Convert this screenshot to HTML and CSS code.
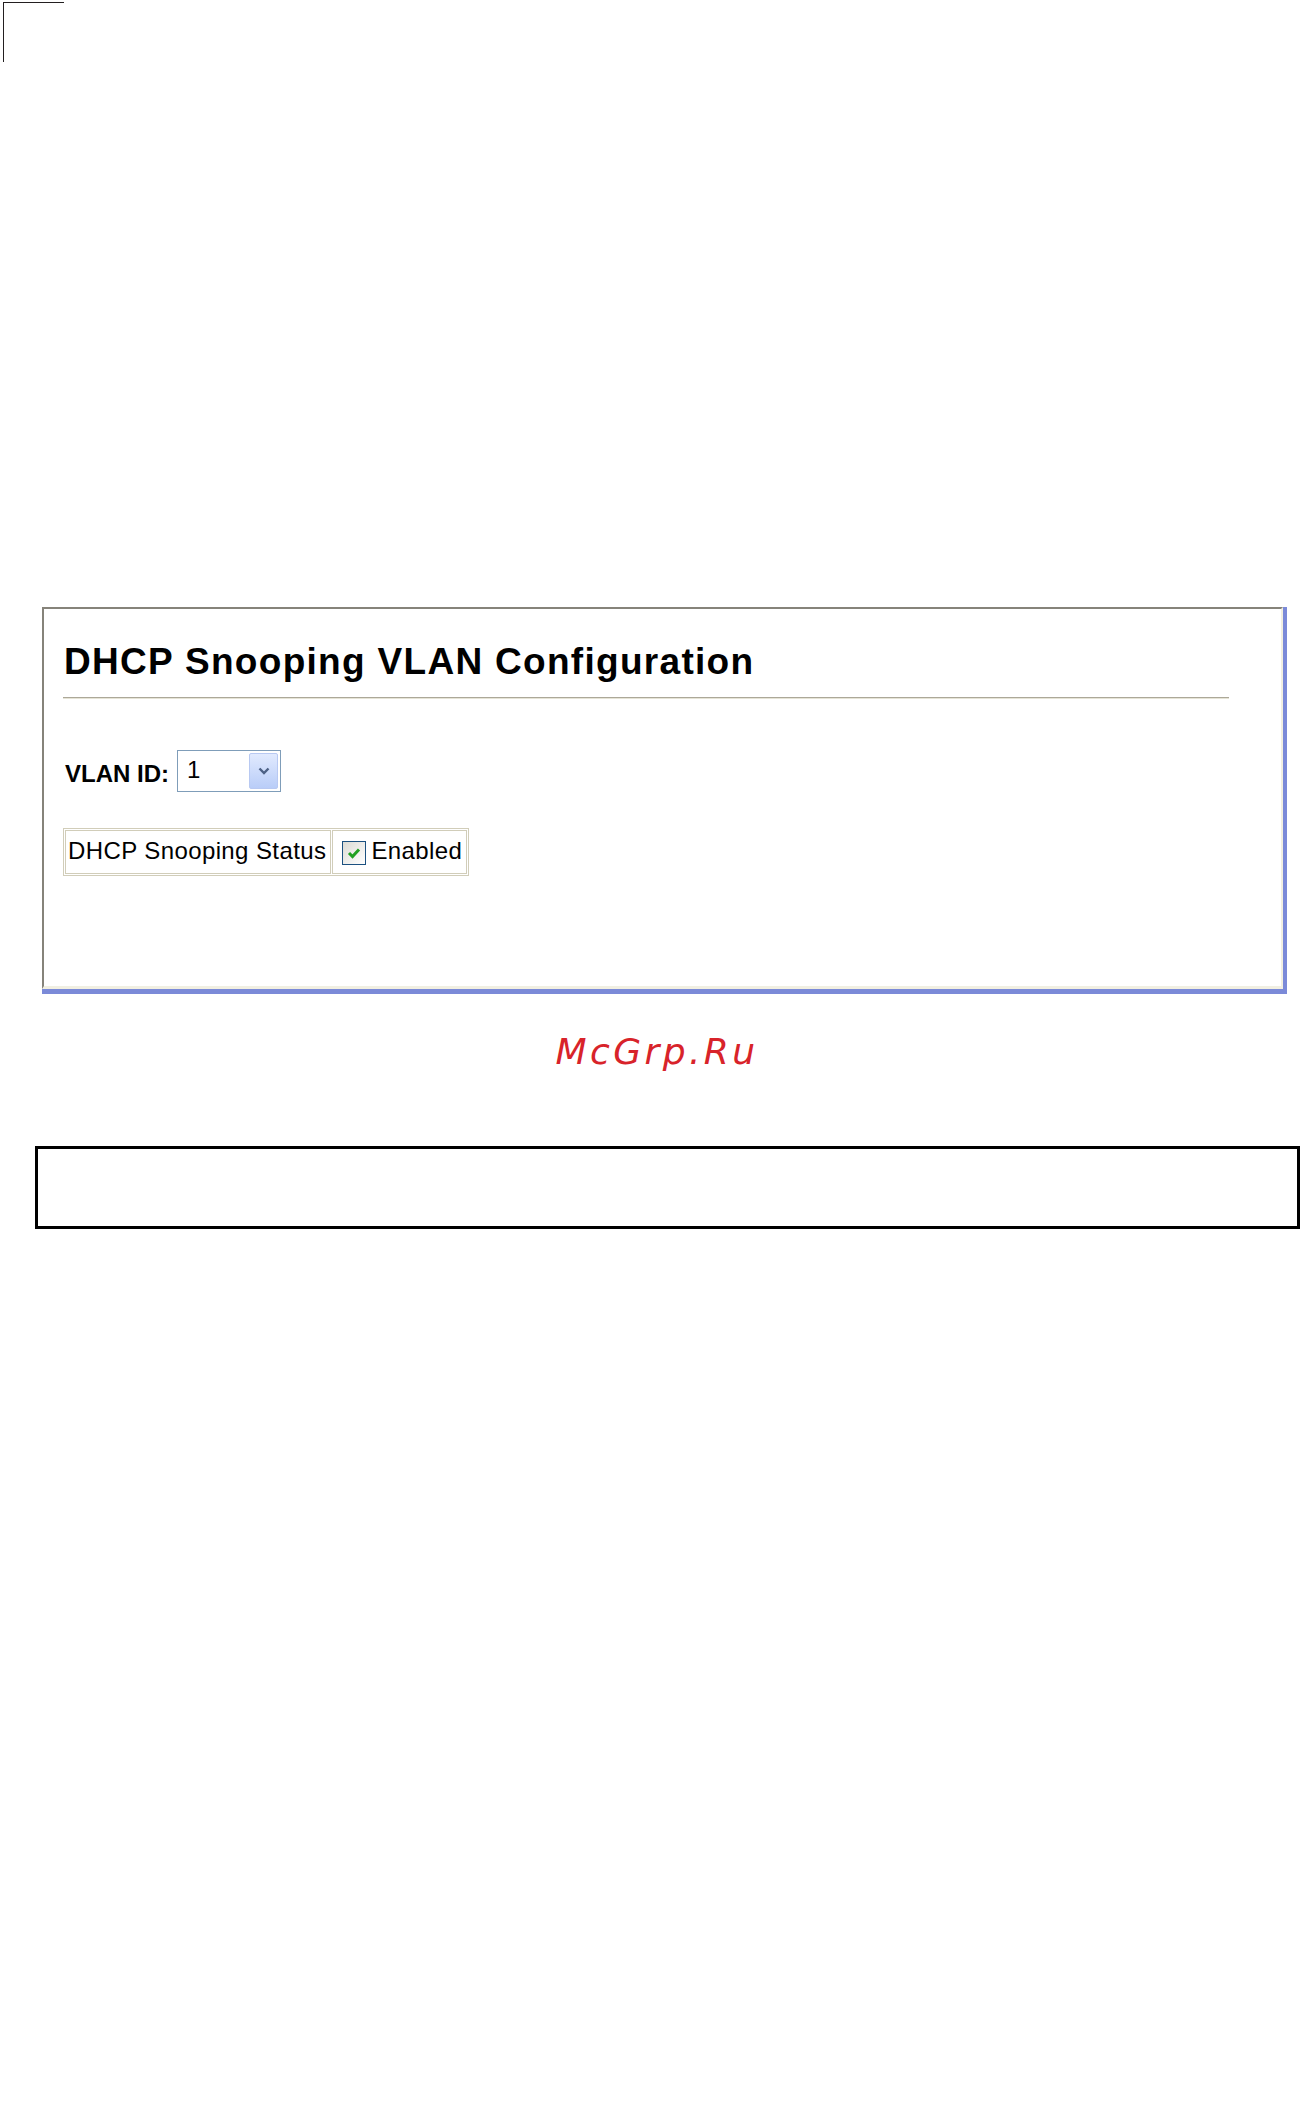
FILE: index.html
```html
<!DOCTYPE html>
<html lang="en">
  <head>
    <meta charset="UTF-8" />
    <meta name="viewport" content="width=device-width, initial-scale=1.0" />
    <title>DHCP Snooping VLAN Configuration</title>
    <link rel="stylesheet" href="styles.css">
  </head>
  <body>
    <div class="crop-mark"></div>

    <div class="panel">
      <div class="panel-inner">
        <h1>DHCP Snooping VLAN Configuration</h1>

        <div class="vlan-row">
          <label for="vlan">VLAN ID:</label>
          <div class="select" id="vlan">
            <span class="select-value">1</span>
            <span class="select-btn">
              <svg width="12" height="8" viewBox="0 0 12 8">
                <path d="M1.5 1.5 L6 6 L10.5 1.5" fill="none" stroke="#4d6185" stroke-width="2.4" />
              </svg>
            </span>
          </div>
        </div>

        <table class="status">
          <tr>
            <td>DHCP Snooping Status</td>
            <td class="status-value"><span class="check"><svg width="18" height="18" viewBox="0 0 18 18"><path d="M4 9 L7.5 12.5 L14 5.5" fill="none" stroke="#21a121" stroke-width="3" /></svg></span>Enabled</td>
          </tr>
        </table>
      </div>
    </div>

    <p class="mark">McGrp.Ru</p>

    <div class="note-box"></div>
  </body>
</html>
```

FILE: styles.css
```css
* {
  box-sizing: border-box;
}
body {
  margin: 0;
  background: #fff;
  font-family: "Liberation Sans", Arial, sans-serif;
  color: #000;
}

.crop-mark {
  width: 61px;
  height: 60px;
  margin: 2px 0 0 3px;
  border-top: 1px solid #231f20;
  border-left: 1px solid #231f20;
}

/* window frame */
.panel {
  width: 1245px;
  margin: 545px 0 0 42px;
  border-right: 4px solid #7b8ad8;
  border-bottom: 5px solid #7b8ad8;
}
.panel-inner {
  border-top: 2px solid #86837a;
  border-left: 2px solid #86837a;
  border-right: 2px solid #f1efe2;
  border-bottom: 3px solid #f1efe2;
  padding: 0 0 110px 19px;
}

h1 {
  width: 1166px;
  margin: 32px 0 0;
  padding: 0 0 14px 1px;
  font-size: 37px;
  line-height: 42px;
  font-weight: bold;
  letter-spacing: 1.3px;
  border-bottom: 1px solid #aca899;
  box-shadow: 0 1px 0 #e6e4d6;
}

.vlan-row {
  display: flex;
  align-items: flex-end;
  gap: 8px;
  margin: 52px 0 0 2px;
}
.vlan-row label {
  font-size: 24px;
  font-weight: bold;
  line-height: 28px;
  margin-bottom: 4px;
}
.select {
  display: flex;
  align-items: center;
  justify-content: space-between;
  width: 104px;
  height: 42px;
  border: 1px solid #7f9db9;
  padding: 2px 2px 2px 9px;
  background: #fff;
}
.select-value {
  font-size: 24px;
  line-height: 28px;
  margin-top: -2px;
}
.select-btn {
  display: flex;
  align-items: center;
  justify-content: center;
  width: 29px;
  height: 36px;
  border: 1px solid #b8c9f2;
  border-radius: 2px;
  background: linear-gradient(#e1eafe, #b9cdf8);
}

.status {
  margin-top: 36px;
  border: 1px solid #d1cdb9;
  border-spacing: 1px;
  font-size: 24px;
  line-height: 28px;
  letter-spacing: 0.4px;
}
.status td {
  border: 1px solid #d1cdb9;
  padding: 6px 4px 8px 2px;
  white-space: nowrap;
}
.status .status-value {
  padding-left: 9px;
}
.check {
  display: inline-flex;
  align-items: center;
  justify-content: center;
  width: 24px;
  height: 24px;
  margin-right: 5px;
  vertical-align: -3px;
  border: 1px solid #1c5180;
  background: linear-gradient(135deg, #dcdbd4, #fff);
}

.mark {
  margin: 38px 0 0;
  padding-left: 14px;
  text-align: center;
  font-family: "DejaVu Sans", sans-serif;
  font-style: oblique;
  font-size: 36px;
  line-height: 40px;
  letter-spacing: 3.4px;
  color: #d8232a;
}

.note-box {
  width: 1265px;
  height: 83px;
  margin: 74px 0 0 35px;
  border: 3px solid #000;
}
```
